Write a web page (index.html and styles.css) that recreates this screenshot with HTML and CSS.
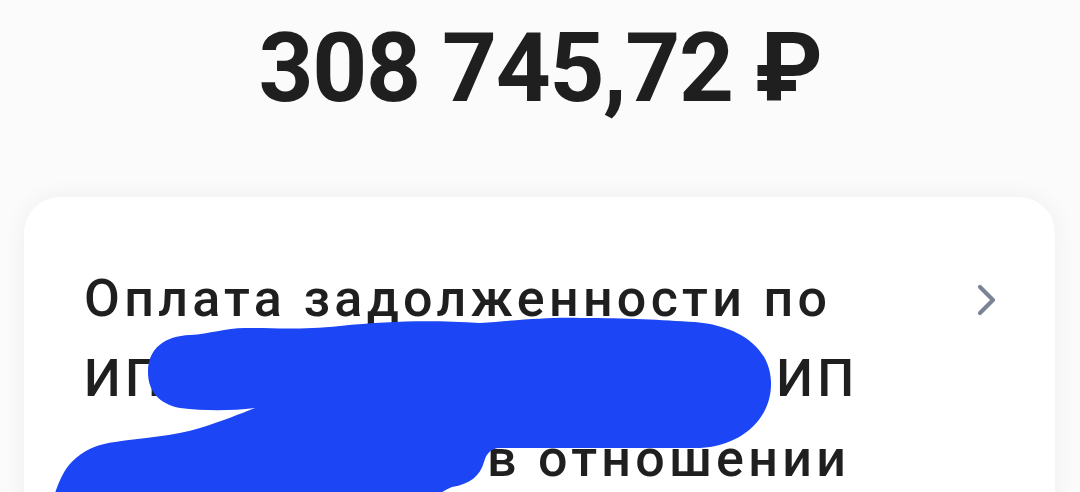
FILE: index.html
```html
<!DOCTYPE html>
<html lang="ru">
<head>
<meta charset="utf-8">
<title>Платёж</title>
<link rel="stylesheet" href="styles.css">
</head>
<body>
<div class="screen">
  <div class="amount">308 745,72 ₽</div>
  <div class="card">
    <div class="row">
      <div class="title">
        <div class="line">Оплата задолженности по</div>
        <div class="line">ИП<span class="gap gap-a"></span>ИП</div>
        <div class="line"><span class="gap gap-b"></span>в отношении</div>
      </div>
      <svg class="chevron" width="24" height="36" viewBox="0 0 24 36" aria-hidden="true">
        <path d="M5 5 L18 18 L5 31" fill="none" stroke="#7b8497" stroke-width="4.2" stroke-linecap="round" stroke-linejoin="round"/>
      </svg>
    </div>
  </div>
  <svg class="redact" width="1080" height="492" viewBox="0 0 1080 492" aria-hidden="true">
    <path fill="#1b45f5" d="M148 372
      C148 348 165 336 190 335
      C210 334 225 328 245 328
      C275 328 300 330 340 326
      C390 321 430 320 480 323
      C520 320 550 317 580 318
      C630 318 660 320 695 322
      C740 326 770 348 771 382
      C772 420 740 446 700 448
      L500 448
      C490 448 486 455 484 462
      C480 476 470 484 452 487
      C445 490 440 493 438 496
      L54 496
      C60 478 66 466 76 458
      C88 448 100 444 115 442
      C140 438 175 436 200 428
      C222 421 240 414 255 408
      C230 411 205 411 180 408
      C160 404 148 392 148 372 Z"/>
  </svg>
</div>
</body>
</html>
```

FILE: styles.css
```css
html, body {
  margin: 0;
  padding: 0;
}

body {
  background: #fbfbfb;
  font-family: Roboto, "Noto Sans", "Liberation Sans", sans-serif;
  color: #1f1f1f;
}

.screen {
  position: relative;
  width: 1080px;
  height: 492px;
  overflow: hidden;
  padding-top: 12px;
  box-sizing: border-box;
}

.amount {
  font-size: 96px;
  font-weight: 700;
  line-height: 112px;
  text-align: center;
  color: #1f1f1f;
  letter-spacing: -1.4px;
}

.card {
  margin: 73px 25px 0 24px;
  background: #ffffff;
  border-radius: 36px;
  box-shadow: 0 0 24px rgba(0, 0, 0, 0.055);
  padding: 62px 56px 0 60px;
  height: 420px;
  box-sizing: border-box;
}

.row {
  display: flex;
  align-items: flex-start;
  justify-content: space-between;
}

.title {
  font-size: 52px;
  font-weight: 500;
  line-height: 80px;
  letter-spacing: 4.3px;
  color: #1f1f1f;
}

.line {
  white-space: nowrap;
}

.gap {
  display: inline-block;
  height: 1px;
}

.gap-a {
  width: 610px;
}

.gap-b {
  width: 403px;
}

.chevron {
  margin-top: 23px;
  flex: none;
}

.redact {
  position: absolute;
  top: 0;
  left: 0;
  pointer-events: none;
}
```
